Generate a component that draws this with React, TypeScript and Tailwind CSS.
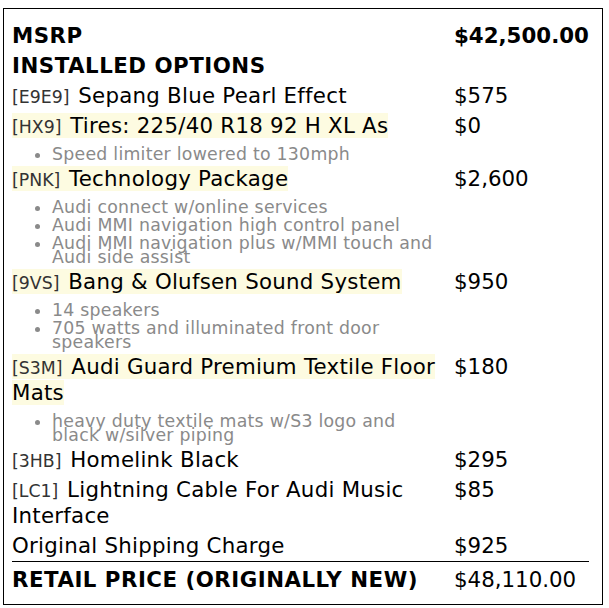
type Item = {
  code?: string;
  name: string;
  price?: string;
  bold?: boolean;
  highlight?: boolean;
  notes?: string[];
};

const items: Item[] = [
  { name: 'MSRP', price: '$42,500.00', bold: true },
  { name: 'INSTALLED OPTIONS', bold: true },
  { code: 'E9E9', name: 'Sepang Blue Pearl Effect', price: '$575' },
  {
    code: 'HX9',
    name: 'Tires: 225/40 R18 92 H XL As',
    price: '$0',
    highlight: true,
    notes: ['Speed limiter lowered to 130mph'],
  },
  {
    code: 'PNK',
    name: 'Technology Package',
    price: '$2,600',
    highlight: true,
    notes: [
      'Audi connect w/online services',
      'Audi MMI navigation high control panel',
      'Audi MMI navigation plus w/MMI touch and Audi side assist',
    ],
  },
  {
    code: '9VS',
    name: 'Bang & Olufsen Sound System',
    price: '$950',
    highlight: true,
    notes: ['14 speakers', '705 watts and illuminated front door speakers'],
  },
  {
    code: 'S3M',
    name: 'Audi Guard Premium Textile Floor Mats',
    price: '$180',
    highlight: true,
    notes: ['heavy duty textile mats w/S3 logo and black w/silver piping'],
  },
  { code: '3HB', name: 'Homelink Black', price: '$295' },
  { code: 'LC1', name: 'Lightning Cable For Audi Music Interface', price: '$85' },
  { name: 'Original Shipping Charge', price: '$925' },
];

const ItemRow = ({ item }: { item: Item }) => (
  <>
    <div className="py-[2px] pr-[4px] text-[21.33px] leading-[26px]">
      <span className={item.highlight ? 'bg-[#fdfbe1]' : ''}>
        {item.code && (
          <span className="pr-[2px] text-[17.33px] leading-[18px] text-[#333]">[{item.code}]</span>
        )}
        {item.code && ' '}
        <span className={item.bold ? 'font-bold tracking-[0.5px]' : 'tracking-[0.25px]'}>{item.name}</span>
      </span>
    </div>
    <div className={`py-[2px] text-[21.33px] leading-[26px] ${item.bold ? 'font-bold' : ''}`}>
      {item.price}
    </div>
    {item.notes && (
      <>
        <ul className="list-disc pb-[3px] pl-[40px] pr-[10px] pt-[2px] text-[17.33px] leading-[14px] tracking-[0.25px] text-[#8a8a8a]">
          {item.notes.map((note) => (
            <li className="mt-[4px]" key={note}>
              {note}
            </li>
          ))}
        </ul>
        <div />
      </>
    )}
  </>
);

export default function App() {
  return (
    <div className="min-h-screen bg-white pl-[3px] pt-[8px] font-['DejaVu_Sans',sans-serif] text-black">
      <div className="h-[597px] w-[600px] border border-black pl-[8px] pt-[12px]">
        <div className="grid w-[577px] grid-cols-[442px_135px]">
          {items.map((item) => (
            <ItemRow item={item} key={item.name} />
          ))}
          <div className="col-span-2 grid grid-cols-[442px_135px] border-t border-black pt-[5px] text-[21.33px] leading-[26px]">
            <div className="font-bold tracking-[0.5px]">RETAIL PRICE (ORIGINALLY NEW)</div>
            <div>$48,110.00</div>
          </div>
        </div>
      </div>
    </div>
  );
}
